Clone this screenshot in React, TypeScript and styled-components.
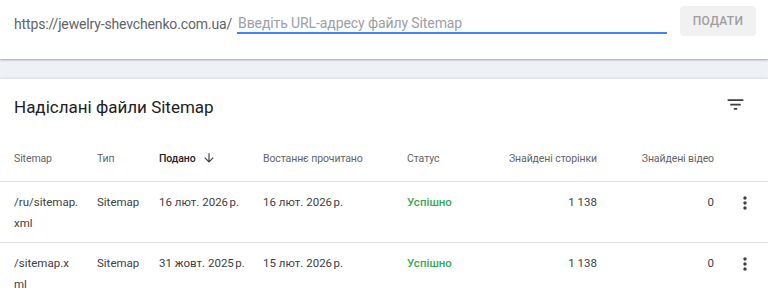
import React from "react";
import styled, { createGlobalStyle } from "styled-components";

const GlobalStyle = createGlobalStyle`
  html, body {
    margin: 0;
    padding: 0;
    background: #eef1f5;
    font-family: Roboto, "Noto Sans", sans-serif;
    -webkit-font-smoothing: antialiased;
  }
`;

interface SitemapRow {
  path: string;
  type: string;
  submitted: string;
  lastRead: string;
  status: string;
  pages: string;
  videos: string;
}

const rows: SitemapRow[] = [
  {
    path: "/ru/sitemap.xml",
    type: "Sitemap",
    submitted: "16 лют. 2026\u202Fр.",
    lastRead: "16 лют. 2026\u202Fр.",
    status: "Успішно",
    pages: "1 138",
    videos: "0",
  },
  {
    path: "/sitemap.xml",
    type: "Sitemap",
    submitted: "31 жовт. 2025\u202Fр.",
    lastRead: "15 лют. 2026\u202Fр.",
    status: "Успішно",
    pages: "1 138",
    videos: "0",
  },
];

const FilterIcon = () => (
  <svg width="21" height="21" viewBox="0 0 24 24" fill="#3c4043">
    <path d="M10 18h4v-2h-4v2zM3 6v2h18V6H3zm3 7h12v-2H6v2z" />
  </svg>
);

const MoreIcon = () => (
  <svg width="20" height="20" viewBox="0 0 24 24" fill="#3c4043">
    <path d="M12 8c1.1 0 2-.9 2-2s-.9-2-2-2-2 .9-2 2 .9 2 2 2zm0 2c-1.1 0-2 .9-2 2s.9 2 2 2 2-.9 2-2-.9-2-2-2zm0 6c-1.1 0-2 .9-2 2s.9 2 2 2 2-.9 2-2-.9-2-2-2z" />
  </svg>
);

const ArrowDown = () => (
  <svg width="14" height="14" viewBox="0 0 24 24" fill="#3c4043">
    <path d="M20 12l-1.41-1.41L13 16.17V4h-2v12.17l-5.58-5.59L4 12l8 8 8-8z" />
  </svg>
);

export default function App() {
  return (
    <>
      <GlobalStyle />
      <Page>
        <SubmitBar>
          <Prefix>https://jewelry-shevchenko.com.ua/</Prefix>
          <UrlInput placeholder="Введіть URL-адресу файлу Sitemap" />
          <SubmitButton>Подати</SubmitButton>
        </SubmitBar>

        <Card>
          <CardHeader>
            <Title>Надіслані файли Sitemap</Title>
            <IconButton aria-label="Фільтр">
              <FilterIcon />
            </IconButton>
          </CardHeader>

          <HeadRow>
            <HeadCell>Sitemap</HeadCell>
            <HeadCell>Тип</HeadCell>
            <HeadCell $active>
              Подано
              <SortArrow>
                <ArrowDown />
              </SortArrow>
            </HeadCell>
            <HeadCell>Востаннє прочитано</HeadCell>
            <HeadCell>Статус</HeadCell>
            <HeadCell $right>Знайдені сторінки</HeadCell>
            <HeadCell $right>Знайдені відео</HeadCell>
            <span />
          </HeadRow>

          {rows.map((r) => (
            <Row key={r.path}>
              <PathCell>{r.path}</PathCell>
              <Cell>{r.type}</Cell>
              <Cell>{r.submitted}</Cell>
              <Cell>{r.lastRead}</Cell>
              <StatusCell>{r.status}</StatusCell>
              <Cell $right>{r.pages}</Cell>
              <Cell $right>{r.videos}</Cell>
              <MenuCell>
                <MoreIcon />
              </MenuCell>
            </Row>
          ))}
        </Card>
      </Page>
    </>
  );
}

const Page = styled.div`
  width: 768px;
  height: 298px;
  overflow: hidden;
  display: flex;
  flex-direction: column;
  gap: 20px;
`;

const SubmitBar = styled.div`
  height: 59px;
  box-sizing: border-box;
  flex-shrink: 0;
  background: #fff;
  box-shadow: 0 1px 2px rgba(60, 64, 67, 0.45);
  display: flex;
  align-items: flex-start;
  padding: 6px 12px 0 14px;
`;

const Prefix = styled.span`
  margin-top: 8px;
  font-size: 14px;
  line-height: 20px;
  letter-spacing: -0.15px;
  color: #5f6368;
  white-space: nowrap;
`;

const UrlInput = styled.input`
  flex: 1;
  box-sizing: border-box;
  margin: 1px 0 0 5px;
  height: 27px;
  padding: 6px 1px 0;
  border: none;
  border-bottom: 2px solid #4285f4;
  outline: none;
  font-family: Roboto, sans-serif;
  font-size: 14px;
  letter-spacing: -0.1px;
  color: #202124;

  &::placeholder {
    color: #9aa0a6;
  }
`;

const SubmitButton = styled.button`
  margin-left: 13px;
  width: 76px;
  height: 30px;
  border: none;
  border-radius: 4px;
  background: #f1f1f1;
  color: #9e9e9e;
  font-family: Roboto, sans-serif;
  font-weight: 500;
  font-size: 12px;
  letter-spacing: 0.3px;
  text-transform: uppercase;
`;

const Card = styled.div`
  flex: 1;
  background: #fff;
  box-shadow: 0 -1px 2px rgba(60, 64, 67, 0.12);
`;

const CardHeader = styled.div`
  height: 56px;
  display: flex;
  align-items: center;
  justify-content: space-between;
  padding: 0 22px 0 14px;
`;

const Title = styled.h2`
  margin: 0;
  font-size: 17px;
  font-weight: 400;
  color: #202124;
`;

const IconButton = styled.span`
  display: flex;
  margin-top: -6px;
`;

const columns = "83px 62px 104px 144px 100px 90px 117px 1fr";

const HeadRow = styled.div`
  display: grid;
  grid-template-columns: ${columns};
  align-items: center;
  height: 46px;
  padding-left: 14px;
  border-bottom: 1px solid #e0e0e0;
`;

const HeadCell = styled.div<{ $active?: boolean; $right?: boolean }>`
  display: flex;
  align-items: center;
  justify-content: ${(p) => (p.$right ? "flex-end" : "flex-start")};
  font-size: 10.5px;
  letter-spacing: -0.1px;
  font-weight: ${(p) => (p.$active ? 500 : 400)};
  color: ${(p) => (p.$active ? "#202124" : "#5f6368")};
  white-space: nowrap;
`;

const SortArrow = styled.span`
  display: flex;
  margin-left: 6px;
`;

const Row = styled.div`
  display: grid;
  grid-template-columns: ${columns};
  align-items: start;
  padding: 10px 0 8px 14px;
  min-height: 42px;
  border-bottom: 1px solid #e0e0e0;
`;

const Cell = styled.div<{ $right?: boolean }>`
  font-size: 11.5px;
  line-height: 21px;
  color: #3c4043;
  text-align: ${(p) => (p.$right ? "right" : "left")};
  white-space: nowrap;
`;

const PathCell = styled(Cell)`
  width: 64.5px;
  white-space: normal;
  word-break: break-all;
`;

const StatusCell = styled(Cell)`
  color: #3aa757;
  font-weight: 500;
`;

const MenuCell = styled.div`
  display: flex;
  justify-content: flex-end;
  padding-right: 13px;
  padding-top: 1px;
`;
